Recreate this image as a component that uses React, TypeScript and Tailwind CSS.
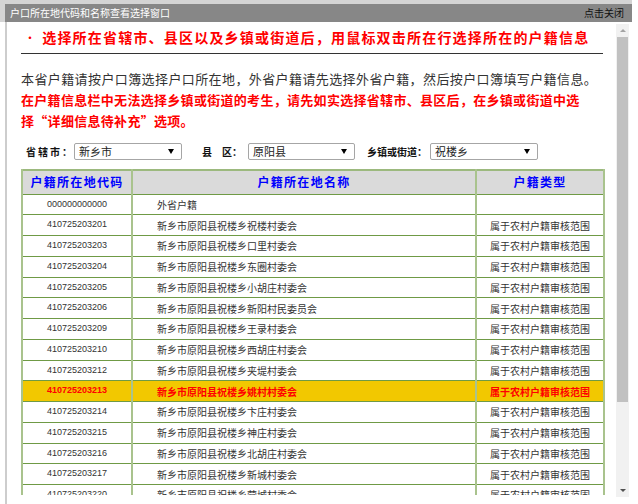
// RegionPicker - 户口所在地代码选择窗口

import React from 'react';

interface Row {
  code: string;
  name: string;
  kind: string;
  active?: boolean;
}

const KIND = '属于农村户籍审核范围';

const rows: Row[] = [
  { code: '000000000000', name: '外省户籍', kind: '' },
  { code: '410725203201', name: '新乡市原阳县祝楼乡祝楼村委会', kind: KIND },
  { code: '410725203203', name: '新乡市原阳县祝楼乡口里村委会', kind: KIND },
  { code: '410725203204', name: '新乡市原阳县祝楼乡东圈村委会', kind: KIND },
  { code: '410725203205', name: '新乡市原阳县祝楼乡小胡庄村委会', kind: KIND },
  { code: '410725203206', name: '新乡市原阳县祝楼乡新阳村民委员会', kind: KIND },
  { code: '410725203209', name: '新乡市原阳县祝楼乡王录村委会', kind: KIND },
  { code: '410725203210', name: '新乡市原阳县祝楼乡西胡庄村委会', kind: KIND },
  { code: '410725203212', name: '新乡市原阳县祝楼乡夹堤村委会', kind: KIND },
  { code: '410725203213', name: '新乡市原阳县祝楼乡姚村村委会', kind: KIND, active: true },
  { code: '410725203214', name: '新乡市原阳县祝楼乡卞庄村委会', kind: KIND },
  { code: '410725203215', name: '新乡市原阳县祝楼乡神庄村委会', kind: KIND },
  { code: '410725203216', name: '新乡市原阳县祝楼乡北胡庄村委会', kind: KIND },
  { code: '410725203217', name: '新乡市原阳县祝楼乡新城村委会', kind: KIND },
  { code: '410725203220', name: '新乡市原阳县祝楼乡营城村委会', kind: KIND },
  { code: '410725203221', name: '新乡市原阳县祝楼乡後屯村委会', kind: KIND },
];

const Select: React.FC<{ value: string; width: string }> = ({ value, width }) => (
  <div
    className={`${width} h-[17px] border border-[#a6a6a6] rounded-[2px] bg-white flex items-center justify-between pl-[4px] pr-[7px]`}
  >
    <span className="text-[11px] leading-none font-normal text-[#222]">{value}</span>
    <span className="w-0 h-0 border-l-[3px] border-r-[3px] border-t-[5px] border-l-transparent border-r-transparent border-t-black" />
  </div>
);

const cell = 'border-y border-y-[#6f9a45] border-x-2 border-x-[#a9c38d]';

export default function App() {
  return (
    <div className="w-[638px] h-[504px] bg-white overflow-hidden font-['Noto_Sans_CJK_SC','Liberation_Sans',sans-serif]">
      {/* window frame top */}
      <div className="h-[4px] w-[632px] bg-[#d4d4d4]" />
      <div className="flex w-[632px] h-[18px]">
        <div className="w-[5px] bg-[#d4d4d4]" />
        <div className="flex-1 bg-[#878787] flex items-center justify-between pl-[5px] pr-[8px] text-[10px] leading-none">
          <span className="text-white">户口所在地代码和名称查看选择窗口</span>
          <span className="text-[#111]">点击关闭</span>
        </div>
      </div>

      <div className="flex w-[632px] h-[482px]">
        <div className="w-[5px]" />
        <div className="w-[2px] bg-[#cdcdcd]" />

        {/* scrolling content */}
        <div className="w-[609px] h-[473px] overflow-hidden pl-[14px] pr-[13px]">
          <div className="mt-[5px] pl-[4px] h-[20px] flex items-center text-[14px] font-bold text-[#ff0000] tracking-[1.2px] whitespace-nowrap">
            <span className="text-[10px] mr-[6px]">·</span>
            选择所在省辖市、县区以及乡镇或街道后，用鼠标双击所在行选择所在的户籍信息
          </div>
          <div className="mt-[6px] border-b border-[#333]" />

          <div className="mt-[14px] text-[13px] leading-[21px] whitespace-nowrap">
            <div className="text-[#333] tracking-[0.4px]">
              本省户籍请按户口簿选择户口所在地，外省户籍请先选择外省户籍，然后按户口簿填写户籍信息。
            </div>
            <div className="text-[#ff0000] font-bold tracking-[0.3px]">
              在户籍信息栏中无法选择乡镇或街道的考生，请先如实选择省辖市、县区后，在乡镇或街道中选
            </div>
            <div className="text-[#ff0000] font-bold tracking-[0.3px]">择“详细信息待补充”选项。</div>
          </div>

          {/* filters */}
          <div className="mt-[12px] flex items-center text-[10px] font-bold text-[#111] leading-none">
            <span className="ml-[5px] tracking-[2px]">省辖市：</span>
            <Select value="新乡市" width="w-[108px]" />
            <span className="ml-[20px]">县</span>
            <span className="ml-[10px]">区：</span>
            <span className="w-[6px]" />
            <Select value="原阳县" width="w-[107px]" />
            <span className="ml-[12px]">乡镇或街道：</span>
            <span className="w-[3px]" />
            <Select value="祝楼乡" width="w-[108px]" />
          </div>

          {/* table */}
          <table className="mt-[9px] w-[582px] table-fixed border-collapse border-2 border-[#9cb97e]">
            <colgroup>
              <col className="w-[110px]" />
              <col className="w-[344px]" />
              <col className="w-[128px]" />
            </colgroup>
            <thead>
              <tr className="h-[24px] bg-[#dadada] text-[12px] font-bold text-[#0000ff] tracking-[1.3px]">
                <th className={cell}>户籍所在地代码</th>
                <th className={cell}>户籍所在地名称</th>
                <th className={cell}>户籍类型</th>
              </tr>
            </thead>
            <tbody>
              {rows.map((r) => (
                <tr
                  key={r.code}
                  className={`h-[20.75px] ${r.active ? 'bg-[#f2c800] text-[#ff0000] font-bold' : 'bg-white text-[#333]'}`}
                >
                  <td className={`${cell} text-center text-[9px] font-['Liberation_Sans',sans-serif]`}>{r.code}</td>
                  <td className={`${cell} pl-[24px] text-[10px] whitespace-nowrap`}>{r.name}</td>
                  <td className={`${cell} text-center text-[10px] whitespace-nowrap`}>{r.kind}</td>
                </tr>
              ))}
            </tbody>
          </table>
        </div>

        {/* scrollbar */}
        <div className="w-[13px] h-[473px] mt-[2px] bg-[#f1f1f1] flex flex-col items-center">
          <div className="h-[13px] flex items-center justify-center">
            <span className="w-0 h-0 border-l-[3px] border-r-[3px] border-b-[3px] border-l-transparent border-r-transparent border-b-[#a3a3a3]" />
          </div>
          <div className="w-[11px] h-[365px] bg-[#c1c1c1]" />
          <div className="flex-1" />
          <div className="h-[14px] flex items-center justify-center">
            <span className="w-0 h-0 border-l-[3px] border-r-[3px] border-t-[3px] border-l-transparent border-r-transparent border-t-[#505050]" />
          </div>
        </div>
      </div>
    </div>
  );
}
